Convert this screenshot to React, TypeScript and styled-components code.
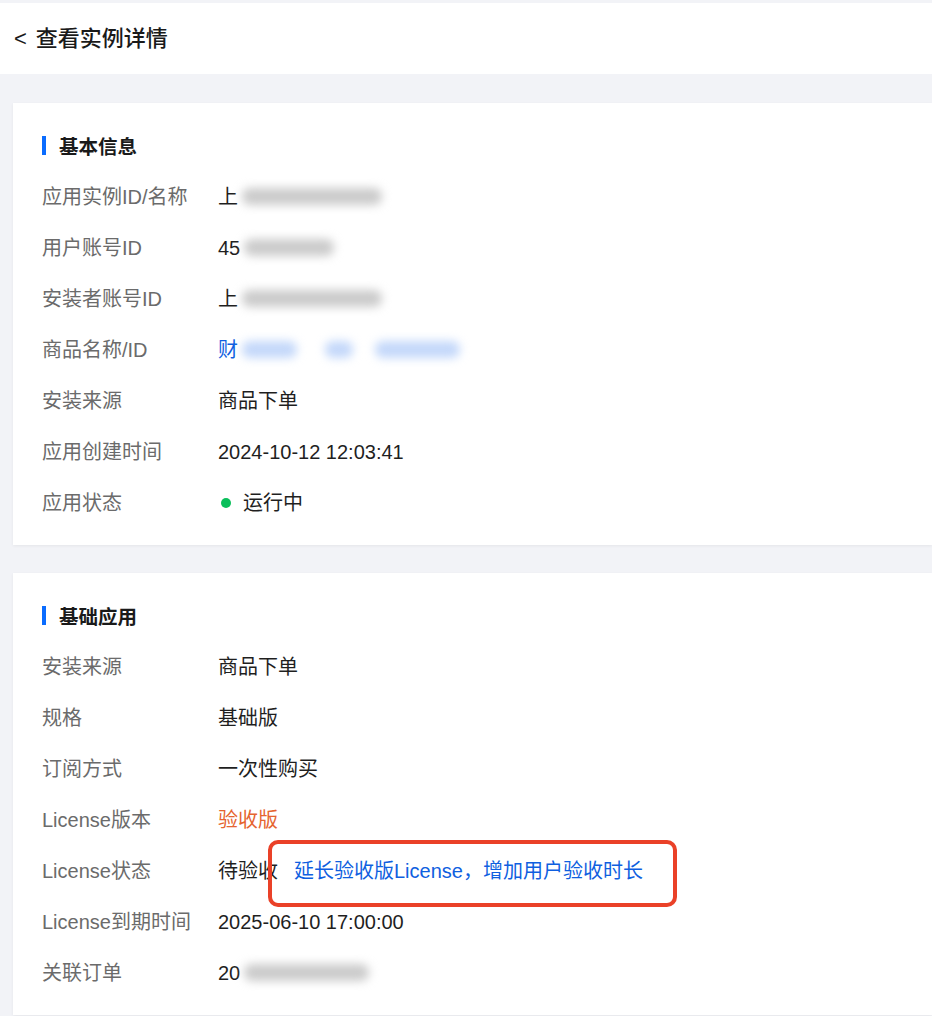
import styled, { createGlobalStyle } from "styled-components";

const GlobalStyle = createGlobalStyle`
  html, body {
    margin: 0;
    padding: 0;
    background: #f2f3f7;
    font-family: "Liberation Sans", "Noto Sans CJK SC", sans-serif;
  }
`;

const PageStyled = styled.div`
  width: 932px;
  min-height: 1016px;
  padding-top: 3px;
  box-sizing: border-box;
  overflow: hidden;
`;

const HeaderStyled = styled.div`
  display: flex;
  align-items: center;
  height: 71px;
  padding-left: 14px;
  background: #ffffff;
  font-size: 22px;
  line-height: 30px;
  font-weight: 500;
  color: #1a1a1a;
`;

const BackStyled = styled.span`
  font-size: 22px;
  font-weight: 400;
  margin-right: 9px;
`;

const ContentStyled = styled.div`
  display: flex;
  flex-direction: column;
  gap: 28px;
  padding: 29px 0 0 13px;
`;

const CardStyled = styled.div`
  background: #ffffff;
  padding: 29px 29px 17px;
  box-shadow: 0 1px 3px rgba(0, 0, 0, 0.06);
`;

const CardTitleStyled = styled.div`
  display: flex;
  align-items: center;
  height: 26px;
  margin-bottom: 13px;
  font-size: 19.5px;
  font-weight: 700;
  color: #1a1a1a;

  &::before {
    content: "";
    width: 4px;
    height: 19px;
    background: #0a6cff;
    margin-right: 13px;
  }
`;

const RowStyled = styled.div`
  position: relative;
  display: flex;
  align-items: center;
  height: 51px;
  font-size: 20px;
  line-height: 28px;
`;

const LabelStyled = styled.div`
  width: 176px;
  flex-shrink: 0;
  color: #6b6b6b;
`;

const ValueStyled = styled.div<{ $tone?: "link" | "warn" }>`
  display: flex;
  align-items: center;
  color: ${({ $tone }) =>
    $tone === "link" ? "#0f5fe0" : $tone === "warn" ? "#e5642f" : "#1f1f1f"};
`;

const BlurStyled = styled.span<{ $w: number; $gap?: number; $blue?: boolean }>`
  display: inline-block;
  width: ${({ $w }) => $w}px;
  height: 17px;
  margin-left: ${({ $gap }) => $gap ?? 4}px;
  border-radius: 8px;
  background: ${({ $blue }) => ($blue ? "#c4d8fa" : "#cbcbcb")};
  filter: blur(5px);
`;

const DotStyled = styled.span`
  width: 10px;
  height: 10px;
  border-radius: 50%;
  background: #0bbf5b;
  margin: 0 12px 0 3px;
`;

const LinkStyled = styled.span`
  color: #0f5fe0;
  margin-left: 16px;
`;

const AnnotationStyled = styled.div`
  position: absolute;
  left: 226px;
  top: -5px;
  width: 409px;
  height: 67px;
  box-sizing: border-box;
  border: 4.5px solid #ea4128;
  border-radius: 10px;
  pointer-events: none;
`;

type Row = {
  label: string;
  value: React.ReactNode;
  tone?: "link" | "warn";
  annotated?: boolean;
};

const basicRows: Row[] = [
  { label: "应用实例ID/名称", value: <>上<BlurStyled $w={140} /></> },
  { label: "用户账号ID", value: <>45<BlurStyled $w={90} /></> },
  { label: "安装者账号ID", value: <>上<BlurStyled $w={140} /></> },
  {
    label: "商品名称/ID",
    tone: "link",
    value: (
      <>
        财<BlurStyled $w={55} $blue />
        <BlurStyled $w={28} $gap={28} $blue />
        <BlurStyled $w={85} $gap={22} $blue />
      </>
    ),
  },
  { label: "安装来源", value: "商品下单" },
  { label: "应用创建时间", value: "2024-10-12 12:03:41" },
  { label: "应用状态", value: <><DotStyled />运行中</> },
];

const appRows: Row[] = [
  { label: "安装来源", value: "商品下单" },
  { label: "规格", value: "基础版" },
  { label: "订阅方式", value: "一次性购买" },
  { label: "License版本", value: "验收版", tone: "warn" },
  {
    label: "License状态",
    annotated: true,
    value: (
      <>
        待验收
        <LinkStyled>延长验收版License，增加用户验收时长</LinkStyled>
      </>
    ),
  },
  { label: "License到期时间", value: "2025-06-10 17:00:00" },
  { label: "关联订单", value: <>20<BlurStyled $w={125} /></> },
];

function InfoCard({ title, rows }: { title: string; rows: Row[] }) {
  return (
    <CardStyled>
      <CardTitleStyled>{title}</CardTitleStyled>
      {rows.map((row, index) => (
        <RowStyled key={index}>
          <LabelStyled>{row.label}</LabelStyled>
          <ValueStyled $tone={row.tone}>{row.value}</ValueStyled>
          {row.annotated && <AnnotationStyled />}
        </RowStyled>
      ))}
    </CardStyled>
  );
}

export default function App() {
  return (
    <PageStyled>
      <GlobalStyle />
      <HeaderStyled>
        <BackStyled>&lt;</BackStyled>查看实例详情
      </HeaderStyled>
      <ContentStyled>
        <InfoCard title="基本信息" rows={basicRows} />
        <InfoCard title="基础应用" rows={appRows} />
      </ContentStyled>
    </PageStyled>
  );
}
